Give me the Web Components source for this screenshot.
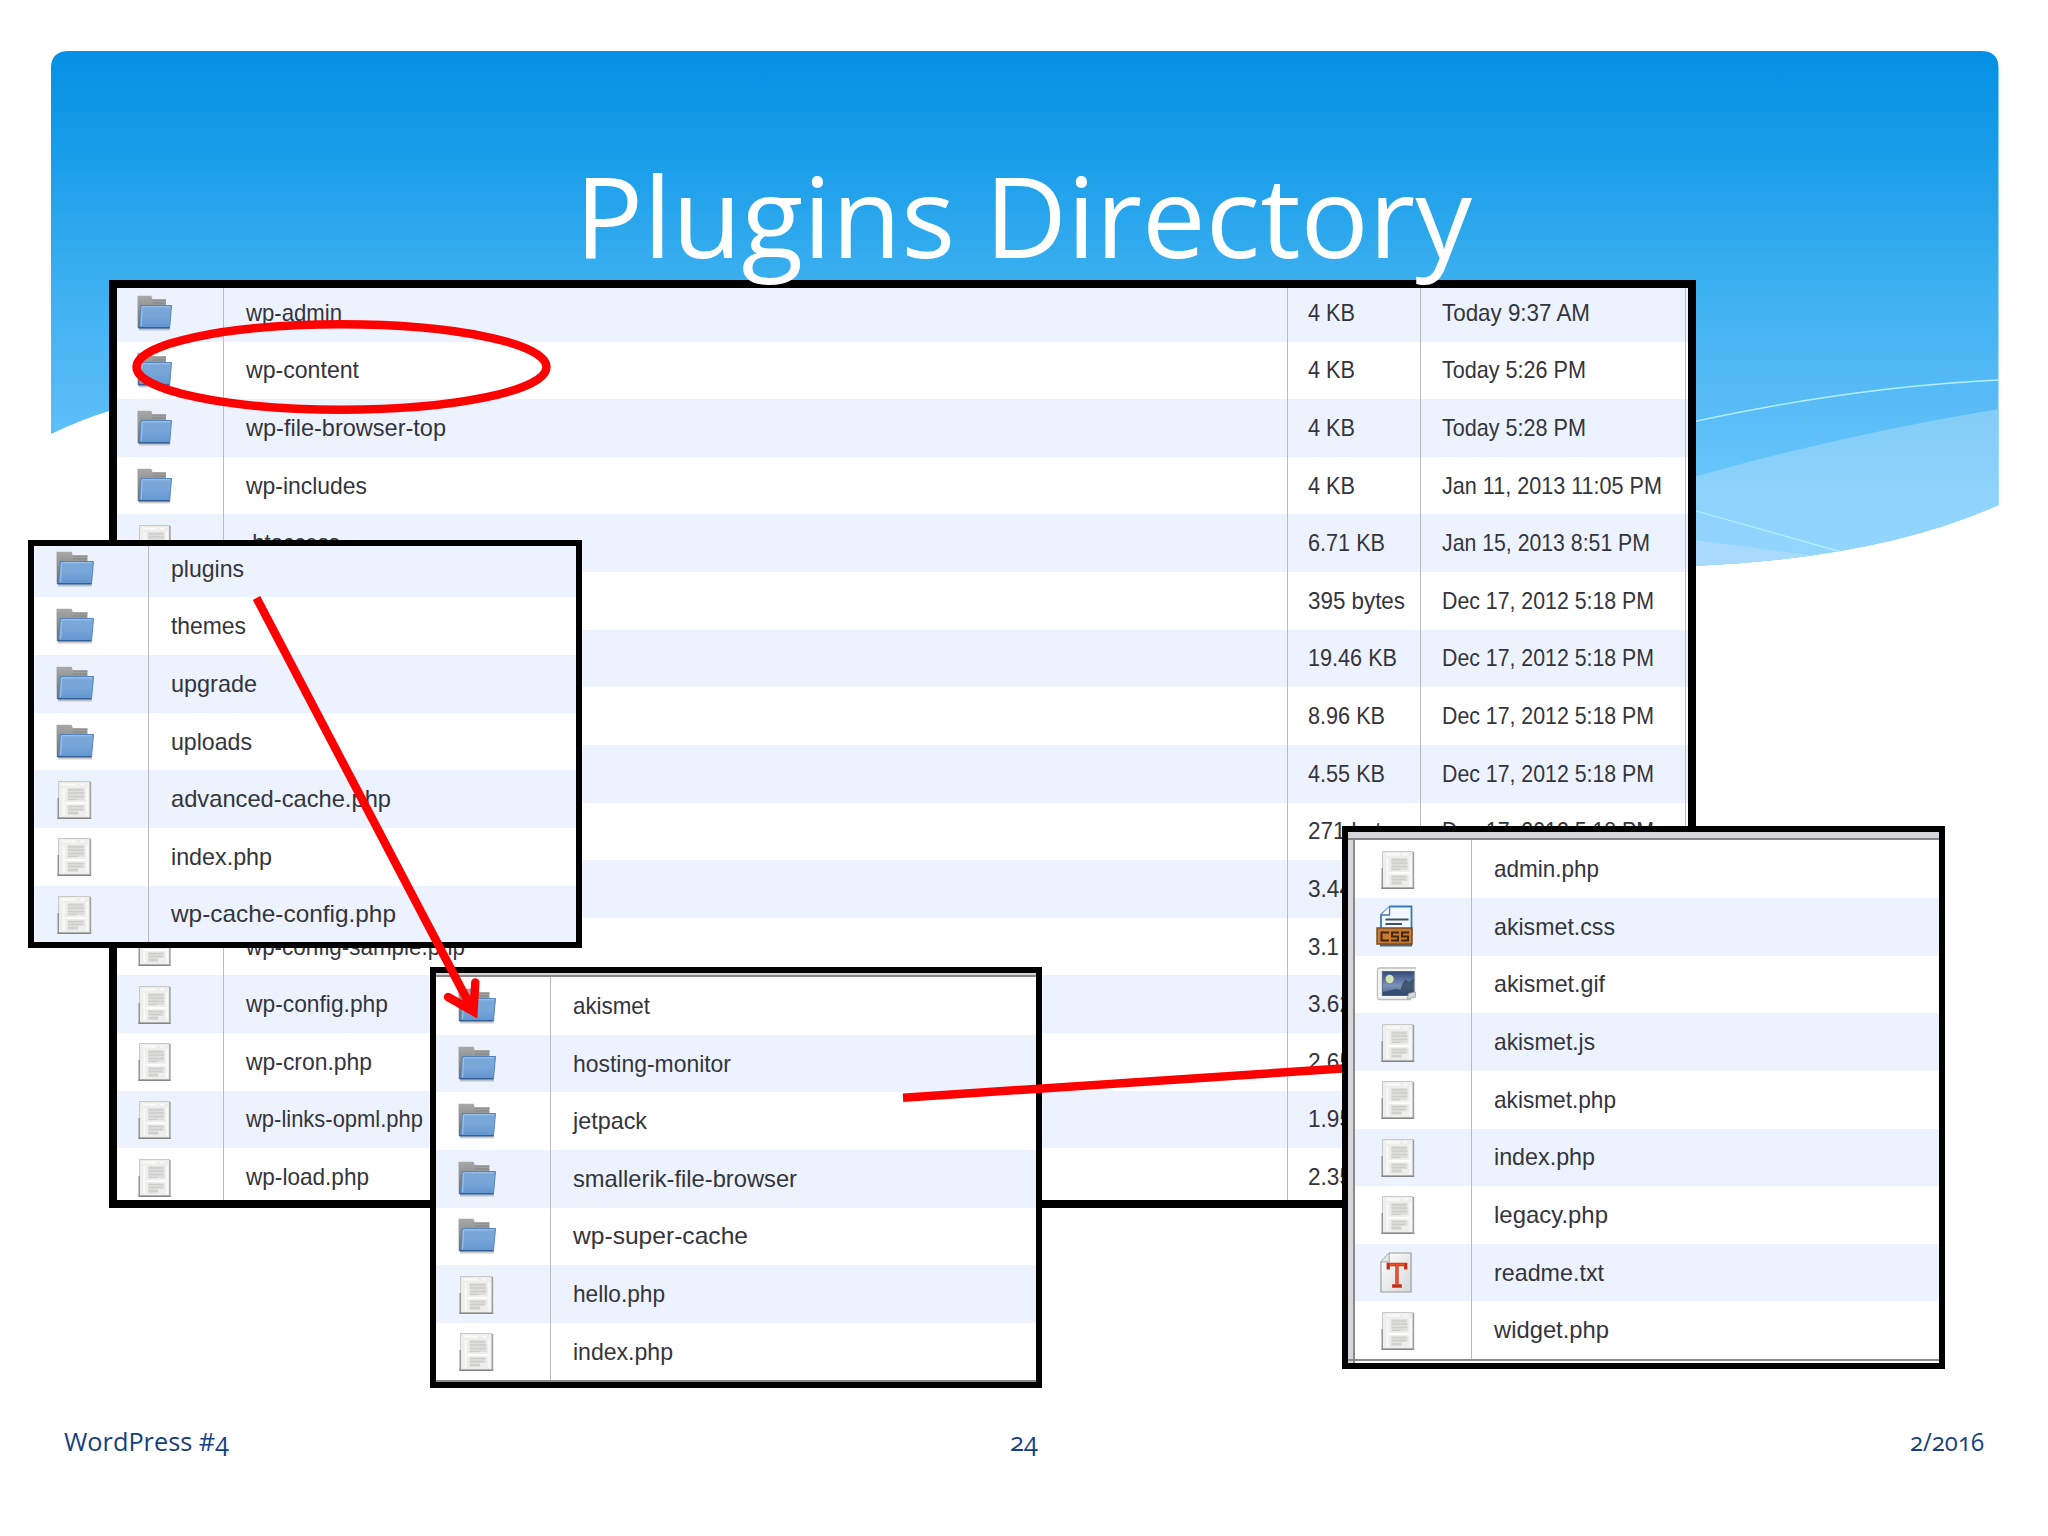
<!DOCTYPE html>
<html lang="en">
<head>
<meta charset="utf-8">
<title>Plugins Directory</title>
<style>
html,body{margin:0;padding:0;width:2048px;height:1536px;overflow:hidden;background:#fff}
</style>
</head>
<body>
<slide-page>
  <slide-banner slot="banner"></slide-banner>

  <file-window slot="canvas" style="left:109px;top:280px;--w:1587px;--h:928px;--b:8px;--shift:-4.1px;--c1:106px;--c2:1063.5px;--c3:133px;--c4:265px;--pad1:22.5px;--pad2:20.5px;--ix:19.5px;--iw:35px;--first:#edf3fe;--second:#fff">
    <file-row icon="folder" name="wp-admin" nw="94" size="4 KB" sw="45" date="Today 9:37 AM" dw="146"></file-row>
    <file-row icon="folder" name="wp-content" nw="111" size="4 KB" sw="45" date="Today 5:26 PM" dw="142"></file-row>
    <file-row icon="folder" name="wp-file-browser-top" nw="198" size="4 KB" sw="45" date="Today 5:28 PM" dw="142"></file-row>
    <file-row icon="folder" name="wp-includes" nw="119" size="4 KB" sw="45" date="Jan 11, 2013 11:05 PM" dw="218"></file-row>
    <file-row icon="file" name=".htaccess" nw="92" size="6.71 KB" sw="75" date="Jan 15, 2013 8:51 PM" dw="206"></file-row>
    <file-row size="395 bytes" sw="95" date="Dec 17, 2012 5:18 PM" dw="210"></file-row>
    <file-row size="19.46 KB" sw="87" date="Dec 17, 2012 5:18 PM" dw="210"></file-row>
    <file-row size="8.96 KB" sw="75" date="Dec 17, 2012 5:18 PM" dw="210"></file-row>
    <file-row size="4.55 KB" sw="75" date="Dec 17, 2012 5:18 PM" dw="210"></file-row>
    <file-row size="271 bytes" sw="95" date="Dec 17, 2012 5:18 PM" dw="210"></file-row>
    <file-row size="3.44" sw="42"></file-row>
    <file-row icon="file" name="wp-config-sample.php" nw="217" size="3.1" sw="29"></file-row>
    <file-row icon="file" name="wp-config.php" nw="140" size="3.62" sw="42"></file-row>
    <file-row icon="file" name="wp-cron.php" nw="124" size="2.65" sw="42"></file-row>
    <file-row icon="file" name="wp-links-opml.php" nw="175" size="1.95" sw="42"></file-row>
    <file-row icon="file" name="wp-load.php" nw="121" size="2.35" sw="42"></file-row>
  </file-window>

  <file-window slot="canvas" style="left:28px;top:540px;--w:554px;--h:408px;--b:6px;--shift:-6.2px;--c1:114.500px;--c2:427px;--pad1:21.500px;--ix:22px;--iw:38px;--first:#edf3fe;--second:#fff">
    <file-row icon="folder" name="plugins" nw="71"></file-row>
    <file-row icon="folder" name="themes" nw="73"></file-row>
    <file-row icon="folder" name="upgrade" nw="84"></file-row>
    <file-row icon="folder" name="uploads" nw="79"></file-row>
    <file-row icon="file" name="advanced-cache.php" nw="218"></file-row>
    <file-row icon="file" name="index.php" nw="99"></file-row>
    <file-row icon="file" name="wp-cache-config.php" nw="223"></file-row>
  </file-window>

  <file-window slot="canvas" style="left:430px;top:967px;--w:612px;--h:421px;--b:6px;--shift:4.1px;--c1:114.500px;--c2:485px;--pad1:22px;--ix:22px;--iw:38px;--first:#fff;--second:#edf3fe;--tline:2px;--tl:#d8d8da;--bl:1px">
    <file-row icon="folder" name="akismet" nw="75"></file-row>
    <file-row icon="folder" name="hosting-monitor" nw="156"></file-row>
    <file-row icon="folder" name="jetpack" nw="72"></file-row>
    <file-row icon="folder" name="smallerik-file-browser" nw="222"></file-row>
    <file-row icon="folder" name="wp-super-cache" nw="173"></file-row>
    <file-row icon="file" name="hello.php" nw="90"></file-row>
    <file-row icon="file" name="index.php" nw="98"></file-row>
  </file-window>

  <slide-marks slot="canvas" kind="link"></slide-marks>

  <file-window slot="canvas" style="left:1342px;top:826px;--w:603px;--h:543px;--b:6px;--shift:8.4px;--c1:116px;--c2:466px;--pad1:22px;--ix:25px;--iw:36px;--first:#fff;--second:#edf3fe;--tline:6px;--tl:#d6d5d8;--side:7px;--bl:3px">
    <file-row icon="file" name="admin.php" nw="103"></file-row>
    <file-row icon="css" name="akismet.css" nw="119"></file-row>
    <file-row icon="image" name="akismet.gif" nw="109"></file-row>
    <file-row icon="file" name="akismet.js" nw="99"></file-row>
    <file-row icon="file" name="akismet.php" nw="120"></file-row>
    <file-row icon="file" name="index.php" nw="99"></file-row>
    <file-row icon="file" name="legacy.php" nw="112"></file-row>
    <file-row icon="text" name="readme.txt" nw="108"></file-row>
    <file-row icon="file" name="widget.php" nw="113"></file-row>
  </file-window>

  <slide-marks slot="canvas" kind="arrow"></slide-marks>

  <fit-text slot="title" w="897">Plugins Directory</fit-text>
  <fit-text slot="footer" w="165">WordPress #4</fit-text>
  <fit-text slot="footer" w="28">24</fit-text>
  <fit-text slot="footer" w="74">2/2016</fit-text>
</slide-page>

<script>
const shadow = (el, html) => { el.attachShadow({mode:'open'}).innerHTML = html; };

/* A single line of text, stretched or condensed to a given width. */
class FitText extends HTMLElement {
  connectedCallback() {
    if (!this.shadowRoot) shadow(this, `<style>
      :host{display:block;white-space:nowrap}
      span{display:inline-block;transform-origin:0 50%}
    </style><span><slot></slot></span>`);
    const w = +this.getAttribute('w'), s = this.shadowRoot.querySelector('span');
    this.style.width = w + 'px';
    const nat = s.offsetWidth;
    if (w && nat) s.style.transform = `scaleX(${w / s.getBoundingClientRect().width})`;
  }
}

class SlidePage extends HTMLElement {
  constructor() {
    super();
    shadow(this, `<style>
      :host{display:flex;flex-direction:column;justify-content:space-between;position:relative;width:2048px;height:1536px;overflow:hidden;background:#fff}
      .back{position:absolute;inset:0}
      header{position:relative;display:flex;padding:138px 0 0 575px;color:#fff;font:400 112px/154px "Open Sans",Candara,sans-serif}
      footer{position:relative;display:grid;grid-template-columns:946px 899.500px auto;padding:0 0 77px 64px;color:#153f83;font:400 25px/36px "Open Sans",Candara,sans-serif;font-variant-numeric:oldstyle-nums}
    </style>
    <div class="back"><slot name="banner"></slot><slot name="canvas"></slot></div>
    <header><slot name="title"></slot></header>
    <footer><slot name="footer"></slot></footer>`);
  }
}

class SlideBanner extends HTMLElement {
  constructor() {
    super();
    shadow(this, `<style>:host{display:block}svg{display:block}</style>
    <svg width="2048" height="600" viewBox="0 0 2048 600">
      <defs>
        <linearGradient id="sky" gradientUnits="userSpaceOnUse" x1="0" y1="51" x2="0" y2="566">
          <stop offset="0" stop-color="#0490e3"/><stop offset=".2" stop-color="#189de9"/>
          <stop offset=".44" stop-color="#3aafef"/><stop offset=".68" stop-color="#58bbf6"/>
          <stop offset=".84" stop-color="#67c7fb"/><stop offset="1" stop-color="#70ccff"/>
        </linearGradient>
        <linearGradient id="haze" gradientUnits="userSpaceOnUse" x1="0" y1="409" x2="0" y2="566">
          <stop offset="0" stop-color="#82cdf7"/><stop offset=".6" stop-color="#8fd4fd"/><stop offset="1" stop-color="#93d6ff"/>
        </linearGradient>
        <clipPath id="shape"><path d="M51 68Q51 51 69 51H1981Q1998.5 51 1998.5 68V505Q1862 566 1640 567Q1400 566 1000 460Q400 330 109 411Q80 420 51 434Z"/></clipPath>
      </defs>
      <g clip-path="url(#shape)">
        <rect x="51" y="51" width="1948" height="520" fill="url(#sky)"/>
        <path d="M1640 493Q1820 438 1999 409V580H1640Z" fill="url(#haze)"/>
        <path d="M1640 533Q1740 546 1840 559V580H1640Z" fill="#a9dafd"/>
        <path d="M1640 434Q1830 388 1999 380" fill="none" stroke="#b5efff" stroke-width="1.300"/>
        <path d="M1640 494L1696 511L1845 553" fill="none" stroke="#b5efff" stroke-width="1.300"/>
      </g>
    </svg>`);
  }
}

/* Red annotations drawn over the windows. */
class SlideMarks extends HTMLElement {
  constructor() {
    super();
    const art = this.getAttribute('kind') === 'link'
      ? `<path d="M903 1097.7L1350 1068"/>`
      : `<ellipse cx="341.5" cy="367" rx="205" ry="42.7"/>
         <path d="M256.5 598L472 1009"/>
         <path d="M448 997L473.500 1011.500L475.300 982.500" stroke-linecap="round" stroke-miterlimit="10"/>`;
    shadow(this, `<style>:host{display:block;position:absolute;inset:0}</style>
    <svg width="2048" height="1536" fill="none" stroke="#f00" stroke-width="8.4">${art}</svg>`);
  }
}

class FileWindow extends HTMLElement {
  constructor() {
    super();
    shadow(this, `<style>
      :host{display:flex;position:absolute;box-sizing:border-box;width:var(--w);height:var(--h);border:solid #000;border-width:var(--b);background:#fff;overflow:hidden;
        font:24px/28px "Liberation Sans",Arial,sans-serif;color:#34343c}
      .side{box-sizing:border-box;width:calc(var(--side,0px) + 0px);flex:none;background:#d6d5d8}
      .list{flex:1;min-width:0;display:flex;flex-direction:column;margin-top:var(--shift)}
      .top,.bottom{position:absolute;left:0;right:0;box-sizing:border-box}
      .top{top:0;height:calc(var(--tline,0px) + 2px);border-bottom:2px solid #858488;background:var(--tl,none)}
      .bottom{bottom:calc(var(--bl,0px) - 1px);height:2px;background:#8a898d}
      ::slotted(file-row:nth-child(odd)){background:var(--first)}
      ::slotted(file-row:nth-child(even)){background:var(--second)}
    </style>
    <div class="side"></div><div class="list"><slot></slot></div>`);
    const cs = this.getAttribute('style');
    if (cs.includes('--side')) this.shadowRoot.querySelector('.side').style.borderRight = '2px solid #8a898d';
    if (cs.includes('--tline')) this.shadowRoot.innerHTML += '<div class="top"></div><div class="bottom"></div>';
  }
}

class FileRow extends HTMLElement {
  constructor() {
    super();
    const a = n => this.getAttribute(n) || '';
    const t = (n, w) => a(n) ? `<fit-text w="${+a(w) + 2}">${a(n)}</fit-text>` : '';
    const icon = a('icon') ? `<file-icon kind="${a('icon')}"></file-icon>` : '';
    const wide = this.hasAttribute('size');
    shadow(this, `<style>
      :host{display:flex;flex:none;height:57.63px}
      div{box-sizing:border-box;flex:none;display:flex;align-items:center;border-right:1.5px solid #b9bbc1;overflow:hidden}
      .i{width:calc(var(--c1) + .7px);padding-left:var(--ix)}
      .n{width:calc(var(--c2) + .5px);padding-left:var(--pad1)}
      .s{width:calc(var(--c3) + .5px);padding-left:var(--pad2)}
      .d{width:var(--c4);padding-left:var(--pad2)}
      .n:last-child{border:0}
    </style>
    <div class="i">${icon}</div><div class="n">${t('name','nw')}</div>` +
    (wide ? `<div class="s">${t('size','sw')}</div><div class="d">${t('date','dw')}</div>` : ''));
  }
}

const ICONS = {
  folder: `<svg viewBox="0 0 38 36" preserveAspectRatio="none">
    <defs><linearGradient id="b" x1="0" y1="0" x2="0" y2="1"><stop offset="0" stop-color="#7ba8d8"/><stop offset=".5" stop-color="#77a6d9"/><stop offset="1" stop-color="#6296cf"/></linearGradient>
    <linearGradient id="g" x1="0" y1="0" x2="0" y2="1"><stop offset="0" stop-color="#a8a8a6"/><stop offset="1" stop-color="#686d75"/></linearGradient></defs>
    <path d="M2 34.300H36" stroke="#000" stroke-opacity=".2" stroke-width="2.500"/>
    <path d="M.5 .800H15.500L17 4.500H31.500V14H5L3 33H.8Z" fill="url(#g)"/>
    <path d="M17 5H31.500M17 8H31" stroke="#85837f" stroke-width="1"/>
    <path d="M4.500 10.500H37.500L35.500 32.500H2.500Z" fill="url(#b)" stroke="#5683ba" stroke-width="1"/>
    <path d="M5.500 11.800H36M5.500 12L4.600 31" stroke="#9fc4ea" stroke-width="1.100"/><path d="M1.500 32.800H35.500" stroke="#345f98" stroke-width="1.600"/></svg>`,
  file: `<svg viewBox="1.500 0 33.500 40" preserveAspectRatio="none">
    <path d="M3 1.500H33.500V38H3Z" fill="#eeeeed" stroke="#c9c9c9" stroke-width="1"/>
    <path d="M1.800 38.300H34.800" stroke="#858585" stroke-width="1.600"/><path d="M34 2V38.500" stroke="#a0a0a0" stroke-width="1.400"/>
    <path d="M2.700 18V38" stroke="#8f8f8f" stroke-width="1.400"/>
    <path d="M6 4.500H20M24 4.500H28" stroke="#fbfbfb" stroke-width="2"/><path d="M8 8V36M31 7V36" stroke="#f9f9f9" stroke-width="2"/>
    <path d="M12 8H28V20H12ZM12 25.500H28V31H22V35H12Z" fill="#dededd"/>
    <path d="M12 10H27M12 13H28M12 16.500H28M12 19.500H21M12 26.500H27M12 29.500H26M12 33H22" stroke="#cdcdcc" stroke-width="1.400"/>
    <path d="M9 23H30" stroke="#fdfdfd" stroke-width="1.800"/></svg>`,
  css: `<svg viewBox="0 0 37 42" preserveAspectRatio="none">
    <path d="M5 30V10L14 1.500H35.500V30Z" fill="#f1f8ff" stroke="#3b78b8" stroke-width="1.800"/>
    <path d="M5 10H13.500V1.500" fill="#fff" stroke="#3b78b8" stroke-width="1.300"/>
    <path d="M9.500 14.500H32.500M9.500 19H26" stroke="#3d5358" stroke-width="1.800"/>
    <rect x="4" y="38" width="32" height="3.500" fill="#4a6a90"/><rect x="1" y="23" width="35" height="16" fill="#cb7a2b" stroke="#75502c" stroke-width="1.500"/>
    <path d="M13 27.500H5.500V35.500H13M23 27.500H16V31.500H22V35.500H15M33 27.500H26V31.500H32V35.500H25" fill="none" stroke="#38291a" stroke-width="2"/></svg>`,
  image: `<svg viewBox="0 0 42 36" preserveAspectRatio="none">
    <defs><linearGradient id="n" x1="0" y1="0" x2="0" y2="1"><stop offset="0" stop-color="#324a7b"/><stop offset=".6" stop-color="#7d93b8"/><stop offset="1" stop-color="#445a7c"/></linearGradient></defs>
    <path d="M4 2H41V33H4Q1.500 33 1.500 30V5Q1.500 2 4 2Z" fill="#f4f4f2"/>
    <path d="M41 2H4Q1.500 2 1.500 5V30Q1.500 33.500 4 33.500H36" fill="none" stroke="#bdbdbb" stroke-width="1.300"/>
    <rect x="6.500" y="5.500" width="32.500" height="24" fill="url(#n)" stroke="#53658a"/>
    <circle cx="14" cy="13" r="4.200" fill="#d4e4b7"/><path d="M25 24L27 18L30 13.500L34 16L38.500 12V29Z" fill="#34495f" opacity=".8"/>
    <path d="M7 26L21 23L38.500 28V29.300H7Z" fill="#344d72"/><path d="M32 33L33.500 27.500L40.500 26V31Z" fill="#d8d9dc" stroke="#a0a3a8" stroke-width=".8"/></svg>`,
  text: `<svg viewBox="0 0 33 41" preserveAspectRatio="none">
    <defs><linearGradient id="p" x1="0" y1="0" x2="1" y2="1"><stop offset="0" stop-color="#fff"/><stop offset="1" stop-color="#d6d9d9"/></linearGradient></defs>
    <path d="M1 10L9.500 1H32V40H1Z" fill="url(#p)" stroke="#97999b" stroke-width="1.200"/><path d="M1 10H9.500V1" fill="#e5e7e7" stroke="#a3a5a7"/>
    <path d="M8.500 17.500V12.500H26.500V17.500M17.500 13V33M12.500 34H22.500" fill="none" stroke="#c2301b" stroke-width="3.400"/>
    <path d="M9.500 12.500H25.500M17.500 13V33" stroke="#e9502a" stroke-width="2.200"/></svg>`
};
/* Left offset, width, height and top offset of each kind. */
const BOX = {folder:[0,38,36,0], file:[1,34,40,1], css:[-4,37,42,-1], image:[-4,41,36,0], text:[0,32,41,0]};
class FileIcon extends HTMLElement {
  constructor() {
    super();
    const k = this.getAttribute('kind'), b = BOX[k];
    const w = k === 'folder' ? 'var(--iw)' : k === 'file' ? 'calc(var(--iw) * .5 + 15.500px)' : b[1] + 'px';
    shadow(this, `<style>:host{display:block;flex:none;margin-left:${b[0]}px;margin-top:${b[3]}px}
      svg{display:block;width:${w};height:${b[2]}px;overflow:visible}</style>${ICONS[k]}`);
  }
}

customElements.define('file-icon', FileIcon);
customElements.define('fit-text', FitText);
customElements.define('file-row', FileRow);
customElements.define('slide-banner', SlideBanner);
customElements.define('slide-marks', SlideMarks);
customElements.define('file-window', FileWindow);
customElements.define('slide-page', SlidePage);
/* Text is fitted again once every parent font is in place. */
const refit = root => root.querySelectorAll('*').forEach(e => {
  if (e.localName === 'fit-text') { e.shadowRoot.querySelector('span').style.transform = ''; e.connectedCallback(); }
  if (e.shadowRoot) refit(e.shadowRoot);
});
refit(document);
</script>
</body>
</html>
